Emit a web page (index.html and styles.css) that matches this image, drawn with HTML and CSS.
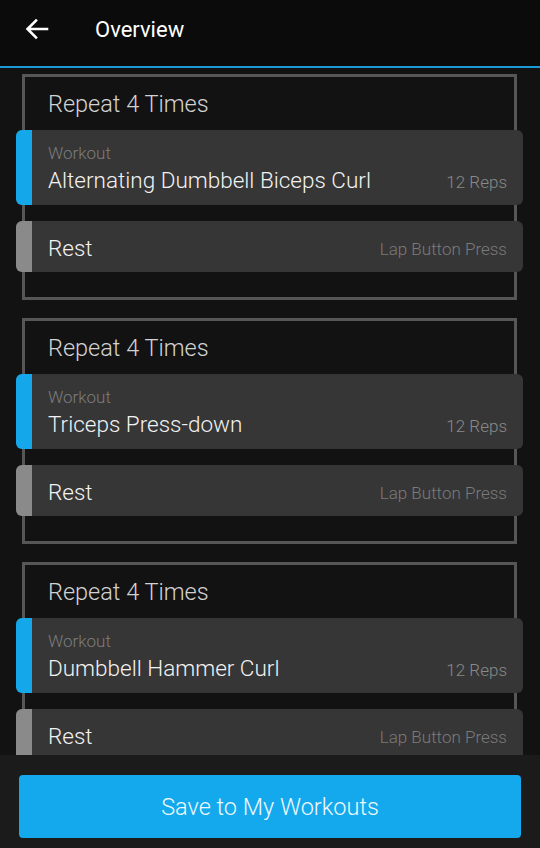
FILE: index.html
```html
<!DOCTYPE html>
<html>
<head>
<meta charset="utf-8">
<link rel="stylesheet" href="styles.css">
</head>
<body>
<div class="app">
  <header class="topbar">
    <svg class="back" width="24" height="22" viewBox="0 0 24 22"><path d="M22 11H3M11 2.5L2.5 11l8.5 8.5" fill="none" stroke="#fff" stroke-width="2.6" stroke-linecap="square"/></svg>
    <h1 class="title">Overview</h1>
  </header>
  <main class="list">
    <section class="repeat">
      <div class="repeat-title">Repeat 4 Times</div>
      <div class="step work">
        <div class="stripe"></div>
        <div class="step-body">
          <div class="step-text"><div class="label">Workout</div><div class="name">Alternating Dumbbell Biceps Curl</div></div>
          <div class="meta">12 Reps</div>
        </div>
      </div>
      <div class="step rest">
        <div class="stripe"></div>
        <div class="step-body">
          <div class="step-text"><div class="name">Rest</div></div>
          <div class="meta">Lap Button Press</div>
        </div>
      </div>
    </section>
    <section class="repeat">
      <div class="repeat-title">Repeat 4 Times</div>
      <div class="step work">
        <div class="stripe"></div>
        <div class="step-body">
          <div class="step-text"><div class="label">Workout</div><div class="name">Triceps Press-down</div></div>
          <div class="meta">12 Reps</div>
        </div>
      </div>
      <div class="step rest">
        <div class="stripe"></div>
        <div class="step-body">
          <div class="step-text"><div class="name">Rest</div></div>
          <div class="meta">Lap Button Press</div>
        </div>
      </div>
    </section>
    <section class="repeat">
      <div class="repeat-title">Repeat 4 Times</div>
      <div class="step work">
        <div class="stripe"></div>
        <div class="step-body">
          <div class="step-text"><div class="label">Workout</div><div class="name">Dumbbell Hammer Curl</div></div>
          <div class="meta">12 Reps</div>
        </div>
      </div>
      <div class="step rest">
        <div class="stripe"></div>
        <div class="step-body">
          <div class="step-text"><div class="name">Rest</div></div>
          <div class="meta">Lap Button Press</div>
        </div>
      </div>
    </section>
  </main>
  <footer class="footer">
    <button class="save">Save to My Workouts</button>
  </footer>
</div>
</body>
</html>
```
FILE: styles.css
```css
* { box-sizing: border-box; }
html, body { margin: 0; padding: 0; }
body {
  background: #121212;
  font-family: Roboto, "Liberation Sans", sans-serif;
  color: #eee;
}
.app {
  height: 848px;
  display: flex;
  flex-direction: column;
  overflow: hidden;
}
.topbar {
  height: 68px;
  flex: none;
  background: #0b0b0b;
  border-bottom: 2px solid #1a9bd7;
  display: flex;
  align-items: center;
  padding: 0 0 8px 25px;
}
.back { display: block; }
.title {
  margin: 0 0 0 46px;
  font-size: 22px;
  font-weight: 400;
  color: #fff;
}
.list {
  flex: 1;
  overflow: hidden;
  padding: 6px 0 0;
  display: flex;
  flex-direction: column;
  gap: 18px;
}
.repeat {
  flex: none;
  margin: 0 23px 0 22px;
  border: 3px solid #565656;
  padding: 0 0 25px;
  display: flex;
  flex-direction: column;
  gap: 16px;
}
.repeat-title {
  height: 37px;
  padding: 13px 0 0 23px;
  font-size: 23.5px;
  font-weight: 300;
  color: #d2d2d2;
  line-height: 28px;
}
.step {
  margin: 0 -9px 0 -9px;
  display: flex;
  border-radius: 6px;
  overflow: hidden;
  background: #363636;
}
.step .stripe { width: 16px; flex: none; }
.work .stripe { background: #14a7ea; }
.rest .stripe { background: #8a8a8a; }
.work { height: 75px; }
.rest { height: 51px; }
.step-body {
  flex: 1;
  display: flex;
  align-items: center;
  justify-content: space-between;
  padding: 0 16px 0 16px;
}
.work .step-body { align-items: flex-end; padding-bottom: 11px; }
.label {
  font-size: 17px;
  font-weight: 300;
  color: #7c7c7c;
  line-height: 20px;
  margin-bottom: 3px;
}
.name {
  font-size: 22.5px;
  font-weight: 300;
  color: #f2f2f2;
  line-height: 28px;
}
.rest .name { margin-top: 3px; }
.meta {
  font-size: 17px;
  font-weight: 300;
  color: #8a8a8a;
  line-height: 20px;
}
.work .meta { margin-bottom: 2px; }
.rest .meta { color: #7a7a7a; margin-top: 4px; }
.footer {
  flex: none;
  height: 93px;
  background: #1b1b1b;
  padding: 20px 19px 10px;
}
.save {
  display: block;
  width: 100%;
  height: 63px;
  border: none;
  border-radius: 4px;
  background: #13a9ec;
  color: #eef8fd;
  font-family: Roboto, "Liberation Sans", sans-serif;
  font-size: 23.5px;
  font-weight: 300;
}
```
